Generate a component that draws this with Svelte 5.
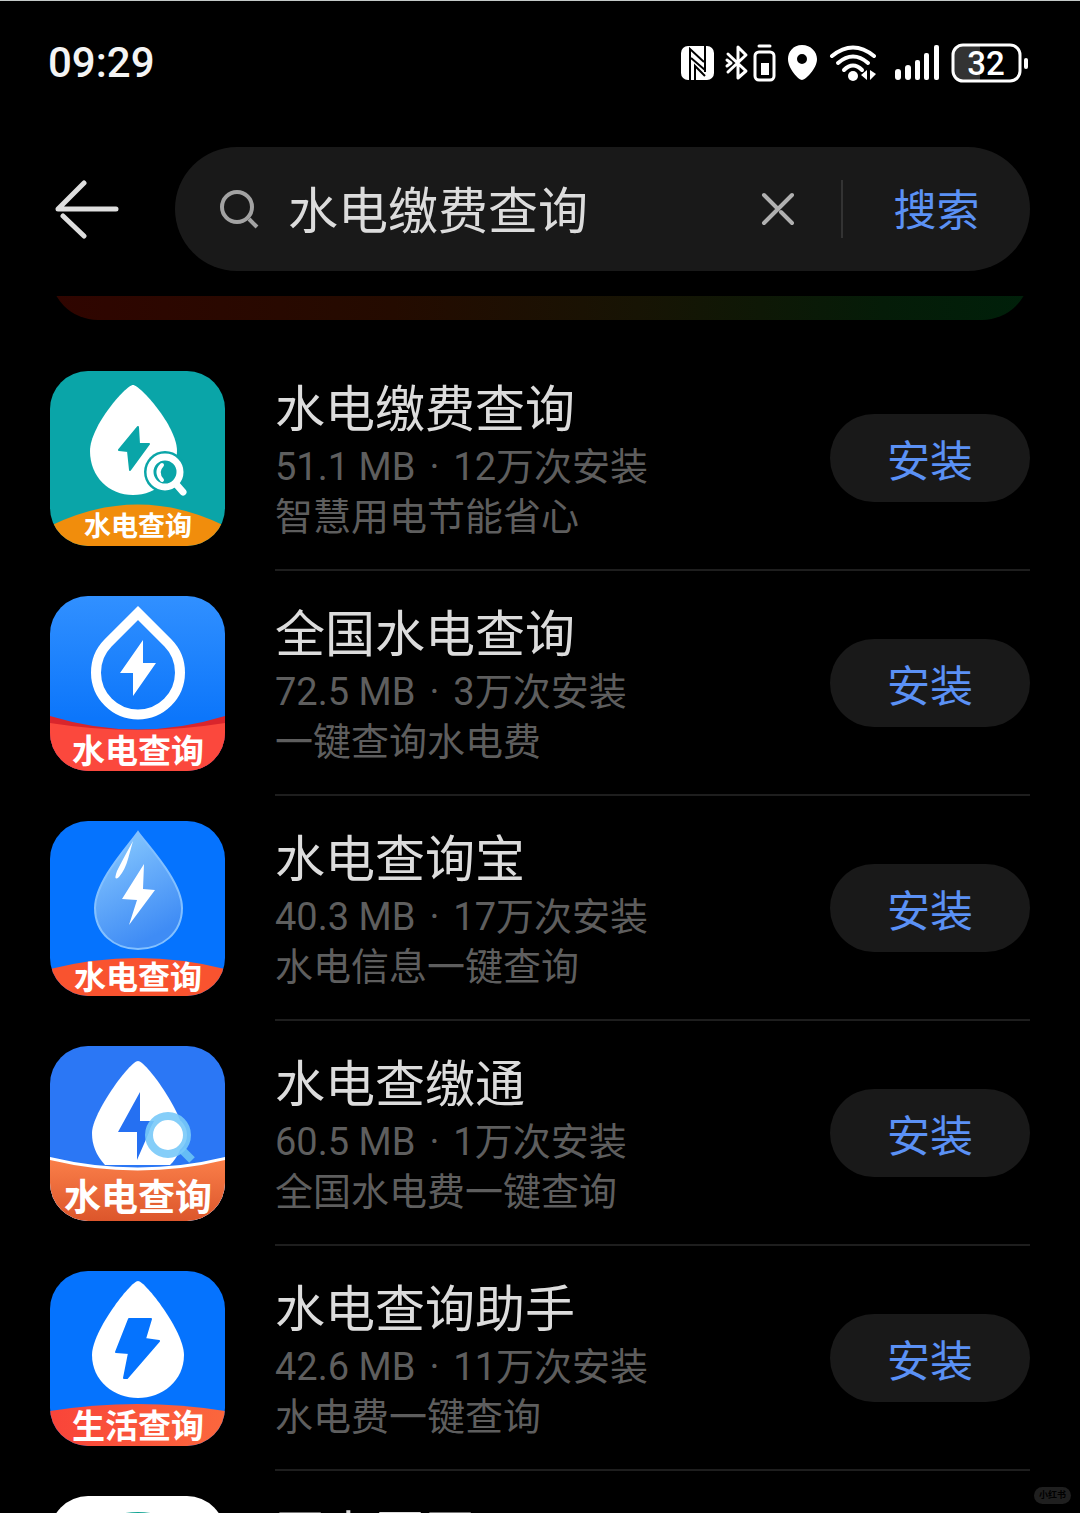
<script>
  let query = $state('水电缴费查询');

  const apps = [
    { id: 'pay', name: '水电缴费查询', size: '51.1 MB', installs: '12万次安装', note: '智慧用电节能省心' },
    { id: 'national', name: '全国水电查询', size: '72.5 MB', installs: '3万次安装', note: '一键查询水电费' },
    { id: 'treasure', name: '水电查询宝', size: '40.3 MB', installs: '17万次安装', note: '水电信息一键查询' },
    { id: 'express', name: '水电查缴通', size: '60.5 MB', installs: '1万次安装', note: '全国水电费一键查询' },
    { id: 'helper', name: '水电查询助手', size: '42.6 MB', installs: '11万次安装', note: '水电费一键查询' },
    { id: 'grid', name: '网上国网', size: '', installs: '', note: '' }
  ];
</script>

<div class="phone">
  <div class="status">
    <time class="clock">09:29</time>
    <svg class="indicators" viewBox="0 1 348 40" aria-hidden="true">
      <!-- NFC -->
      <rect x="1" y="4" width="33" height="34" rx="7" fill="#fff" />
      <path d="M10 38V7L24 20M11 16L25 28M15 38V24L25 34M25 4V30" fill="none" stroke="#000" stroke-width="2" />
      <!-- Bluetooth -->
      <path d="M48 12L66 29L58 36V5L66 13L48 30M47 18L51 21L47 24" fill="none" stroke="#fff" stroke-width="3" stroke-linejoin="round" stroke-linecap="round" />
      <rect x="75" y="10" width="19" height="28" rx="4" fill="none" stroke="#fff" stroke-width="3" />
      <path d="M79 4H90" stroke="#fff" stroke-width="3" stroke-linecap="round" />
      <rect x="81" y="21" width="8" height="12" fill="#fff" />
      <!-- Location -->
      <path fill="#fff" fill-rule="evenodd" d="M122 3C113 3 108 10 108 17C108 27 119 38 122 38C125 38 137 27 137 17C137 10 131 3 122 3ZM122 12A5 5 0 1 1 122 22A5 5 0 1 1 122 12Z" />
      <!-- Wi-Fi -->
      <g fill="none" stroke="#fff" stroke-width="4" stroke-linecap="round">
        <path d="M152 14Q173 -3 194 14" />
        <path d="M158 21Q173 8 188 21" />
        <path d="M164 28Q173 19 182 28" />
      </g>
      <circle cx="173" cy="34" r="5" fill="#fff" />
      <path d="M187 28V38L181 33ZM190 28V38L196 32Z" fill="#fff" />
      <!-- Signal -->
      <g fill="#fff">
        <rect x="215" y="27" width="6" height="11" rx="3" />
        <rect x="225" y="23" width="6" height="15" rx="3" />
        <rect x="235" y="18" width="5" height="20" rx="2" />
        <rect x="244" y="11" width="5" height="27" rx="2" />
        <rect x="254" y="3" width="5" height="35" rx="2" />
      </g>
      <!-- Battery -->
      <path d="M283 3H300V38H283Q274 38 274 29V12Q274 3 283 3Z" fill="#333" />
      <rect x="273" y="3" width="67" height="36" rx="10" fill="none" stroke="#fff" stroke-width="3" />
      <rect x="344" y="16" width="4" height="11" rx="2" fill="#fff" />
      <text x="306" y="33" class="charge">32</text>
    </svg>
  </div>

  <header class="topbar">
    <button class="back" aria-label="返回">
      <svg viewBox="0 0 64 60" aria-hidden="true">
        <path d="M61 30H3L29 4M8 37L29 57" />
      </svg>
    </button>
    <form class="search" onsubmit={(e) => e.preventDefault()}>
      <svg class="lens" viewBox="0 0 42 42" aria-hidden="true">
        <circle cx="19" cy="19" r="15" />
        <path d="M31 31L39 39" />
      </svg>
      <input type="text" aria-label="搜索应用" bind:value={query} />
      <button type="button" class="clear" aria-label="清除" onclick={() => (query = '')}>
        <svg viewBox="0 0 34 34" aria-hidden="true">
          <path d="M3 31L31 3M3 3L16 16M20 20L31 31" />
        </svg>
      </button>
      <button type="submit" class="submit">搜索</button>
    </form>
  </header>

  <div class="promo"><div class="promo-card"></div></div>

  <ul class="results">
    {#each apps as app (app.id)}
      <li class="row">
        <svg class="icon" viewBox="0 0 175 175" aria-hidden="true">
          {#if app.id === 'pay'}
            <rect width="175" height="175" fill="#0aa5a8" />
            <path d="M83 14C90 14 127 55 127 80C127 106 107 124 83 124C59 124 40 106 40 80C40 55 76 14 83 14Z" fill="#fff" />
            <path d="M88 56L89 73L99 73L80 99L78 80L69 79Z" fill="#0aa5a8" stroke="#0aa5a8" stroke-width="2" stroke-linejoin="round" />
            <circle cx="115" cy="101" r="21" fill="#0aa5a8" />
            <path d="M126 113L133 121" stroke="#fff" stroke-width="7" stroke-linecap="round" />
            <circle cx="115" cy="101" r="15" fill="#0aa5a8" stroke="#fff" stroke-width="7" />
            <path d="M112 94Q105 101 112 109" fill="none" stroke="#fff" stroke-width="4" stroke-linecap="round" />
            <path d="M0 155Q88 112 175 155V175H0Z" fill="#f18d0c" />
            <text x="88" y="165" class="tag s27">水电查询</text>
          {:else if app.id === 'national'}
            <defs>
              <linearGradient id="sky" x2="0" y2="1"><stop stop-color="#3190ff" /><stop offset="0.7" stop-color="#0c76fb" /></linearGradient>
            </defs>
            <rect width="175" height="175" fill="url(#sky)" />
            <path d="M88 17L118 47A42 42 0 1 1 58 47Z" fill="none" stroke="#fff" stroke-width="10" />
            <path d="M93 44V67H106L83 100V77H70Z" fill="#fff" />
            <path d="M0 120Q88 147 175 120V175H0Z" fill="#d9252c" />
            <path d="M0 127Q88 141 175 127V175H0Z" fill="#fb483d" />
            <text x="88" y="167" class="tag s33">水电查询</text>
          {:else if app.id === 'treasure'}
            <defs>
              <linearGradient id="glass" x2="0.4" y2="1"><stop stop-color="#8fd0ff" /><stop offset="0.5" stop-color="#66acfa" /><stop offset="1" stop-color="#3f8cf5" /></linearGradient>
            </defs>
            <rect width="175" height="175" fill="#0573fe" />
            <path d="M88 11C97 24 132 60 132 87C132 112 112 128 88 128C64 128 45 112 45 87C45 60 79 24 88 11Z" fill="url(#glass)" stroke="#83c0ff" stroke-width="2" />
            <path d="M83 20Q73 38 67 50Q63 61 69 56Q75 49 78 38Z" fill="#fff" />
            <path d="M94 43L93 68L105 69L79 104L87 79L72 78Z" fill="#fff" />
            <path d="M0 148Q88 126 175 148V175H0Z" fill="#f9532f" />
            <text x="88" y="168" class="tag s32">水电查询</text>
          {:else if app.id === 'express'}
            <defs>
              <linearGradient id="coral" x2="0" y2="1"><stop stop-color="#fa7e49" /><stop offset="1" stop-color="#dc562b" /></linearGradient>
            </defs>
            <rect width="175" height="175" fill="#2b77f5" />
            <path d="M88 15C96 15 133 67 133 87C133 101 128 111 120 119H55C46 109 42 99 42 87C42 67 80 15 88 15Z" fill="#fff" />
            <path d="M90 46V75H104L87 114V86H68Z" fill="#2570f2" />
            <path d="M132 104L142 114" stroke="#65bdf6" stroke-width="8" />
            <circle cx="118" cy="89" r="19" fill="#fff" stroke="#78c9f8" stroke-opacity="0.9" stroke-width="8" />
            <path d="M0 111Q88 132 175 111V175H0Z" fill="#fff" />
            <path d="M0 114Q88 135 175 114V175H0Z" fill="url(#coral)" />
            <text x="88" y="165" class="tag s37">水电查询</text>
          {:else if app.id === 'helper'}
            <defs>
              <linearGradient id="ember"><stop stop-color="#f94439" /><stop offset="1" stop-color="#fb673d" /></linearGradient>
            </defs>
            <rect width="175" height="175" fill="#0573fe" />
            <path d="M88 10C95 10 134 60 134 84C134 110 112 127 88 127C64 127 42 110 42 84C42 60 81 10 88 10Z" fill="#fff" />
            <path d="M79 48H101L95 68L109 70L77 107L74 107L79 82L66 81Z" fill="#0573fe" stroke="#0573fe" stroke-width="2" stroke-linejoin="round" />
            <path d="M0 140Q88 126 175 140V175H0Z" fill="url(#ember)" />
            <text x="88" y="167" class="tag s33">生活查询</text>
          {:else}
            <rect width="175" height="175" fill="#fff" />
            <circle cx="88" cy="88" r="69" fill="none" stroke="#12a594" stroke-width="6" />
          {/if}
        </svg>
        <div class="body">
          <div class="info">
            <h2>{app.name}</h2>
            <p>
              {#if app.size}{app.size}<span class="dot">·</span>{app.installs}{/if}
            </p>
            <p>{app.note}</p>
          </div>
          {#if app.size}
            <button class="install">安装</button>
          {/if}
        </div>
      </li>
    {/each}
  </ul>

  <span class="watermark">小红书</span>
</div>

<style>
  :global(body) {
    margin: 0;
    background: #000;
  }
  .phone {
    position: relative;
    box-sizing: border-box;
    height: 100vh;
    overflow: hidden;
    display: flex;
    flex-direction: column;
    border-top: 1px solid #c4c9c8;
    background: #000;
    color: #dcdcdc;
    font-family: Roboto, 'Noto Sans CJK SC', sans-serif;
  }
  .status,
  .topbar,
  .promo {
    flex: none;
    margin: 0 50px;
  }
  .status {
    height: 123px;
    margin: 0 52px 0 48px;
    display: flex;
    align-items: center;
    justify-content: space-between;
  }
  .clock {
    color: #f4f4f4;
    font-size: 42px;
    font-weight: 500;
    line-height: 50px;
  }
  .indicators {
    width: 348px;
    height: 40px;
  }
  .charge {
    fill: #fff;
    font-size: 33px;
    font-weight: 500;
    text-anchor: middle;
  }
  button {
    padding: 0;
    border: 0;
    background: none;
    font: inherit;
    color: inherit;
    cursor: pointer;
  }
  .topbar {
    display: flex;
    align-items: center;
    padding: 23px 0 25px;
  }
  .back {
    flex: none;
    width: 125px;
    padding-left: 5px;
    text-align: left;
  }
  .back svg {
    display: block;
    width: 64px;
    height: 60px;
    fill: none;
    stroke: #dedede;
    stroke-width: 5;
    stroke-linecap: round;
    stroke-linejoin: round;
  }
  .search {
    flex: 1;
    min-width: 0;
    height: 124px;
    display: flex;
    align-items: center;
    padding-left: 43px;
    box-sizing: border-box;
    border-radius: 62px;
    background: #191919;
  }
  .lens {
    flex: none;
    width: 42px;
    height: 42px;
    margin-right: 28px;
    fill: none;
    stroke: #a3a3a3;
    stroke-width: 4;
  }
  input {
    flex: 1;
    min-width: 0;
    height: 72px;
    padding: 0 0 4px;
    box-sizing: border-box;
    border: 0;
    outline: 0;
    background: none;
    color: #dcdcdc;
    font: inherit;
    font-size: 50px;
  }
  .clear {
    flex: none;
    width: 126px;
  }
  .clear svg {
    display: block;
    width: 34px;
    height: 34px;
    margin: 0 auto;
    fill: none;
    stroke: #b0b0b0;
    stroke-width: 4;
    stroke-linecap: round;
  }
  .submit {
    flex: none;
    width: 189px;
    height: 58px;
    padding-top: 4px;
    border-left: 2px solid #333;
    color: #5b91f5;
    font-size: 43px;
    line-height: 54px;
  }
  .promo {
    height: 24px;
    overflow: hidden;
    display: flex;
    align-items: flex-end;
  }
  .promo-card {
    flex: 1;
    height: 96px;
    border-radius: 48px;
    background: linear-gradient(90deg, #300500, #240b00 35%, #171404 60%, #051c08 85%, #00200a);
  }
  .results {
    flex: 1;
    min-height: 0;
    margin: 0;
    padding: 26px 50px 0;
    overflow: hidden;
    list-style: none;
  }
  .row {
    display: flex;
    gap: 50px;
  }
  .icon {
    flex: none;
    width: 175px;
    height: 175px;
    margin: 25px 0;
    border-radius: 38px;
  }
  .tag {
    fill: #fff;
    font-weight: 700;
    text-anchor: middle;
  }
  .s27 { font-size: 27px; }
  .s32 { font-size: 32px; }
  .s33 { font-size: 33px; }
  .s37 { font-size: 37px; }
  .body {
    flex: 1;
    min-width: 0;
    display: flex;
    align-items: center;
    justify-content: space-between;
    border-bottom: 2px solid #1e1e1e;
    box-sizing: border-box;
  }
  .info {
    min-width: 0;
    padding-top: 4px;
  }
  h2,
  p {
    margin: 0;
    font-weight: 400;
    white-space: nowrap;
  }
  h2 {
    font-size: 50px;
    line-height: 64px;
  }
  p {
    min-height: 50px;
    color: #5e5e5e;
    font-size: 38px;
    line-height: 50px;
  }
  .dot {
    margin: 0 14px;
  }
  .install {
    flex: none;
    width: 200px;
    height: 88px;
    border-radius: 44px;
    background: #191919;
    color: #5b91f5;
    font-size: 43px;
  }
  .watermark {
    position: absolute;
    right: 9px;
    bottom: 9px;
    padding: 0 5px;
    border-radius: 9px;
    background: #1f1f1f;
    color: #000;
    font-size: 9px;
    font-weight: 700;
    line-height: 17px;
  }
</style>
